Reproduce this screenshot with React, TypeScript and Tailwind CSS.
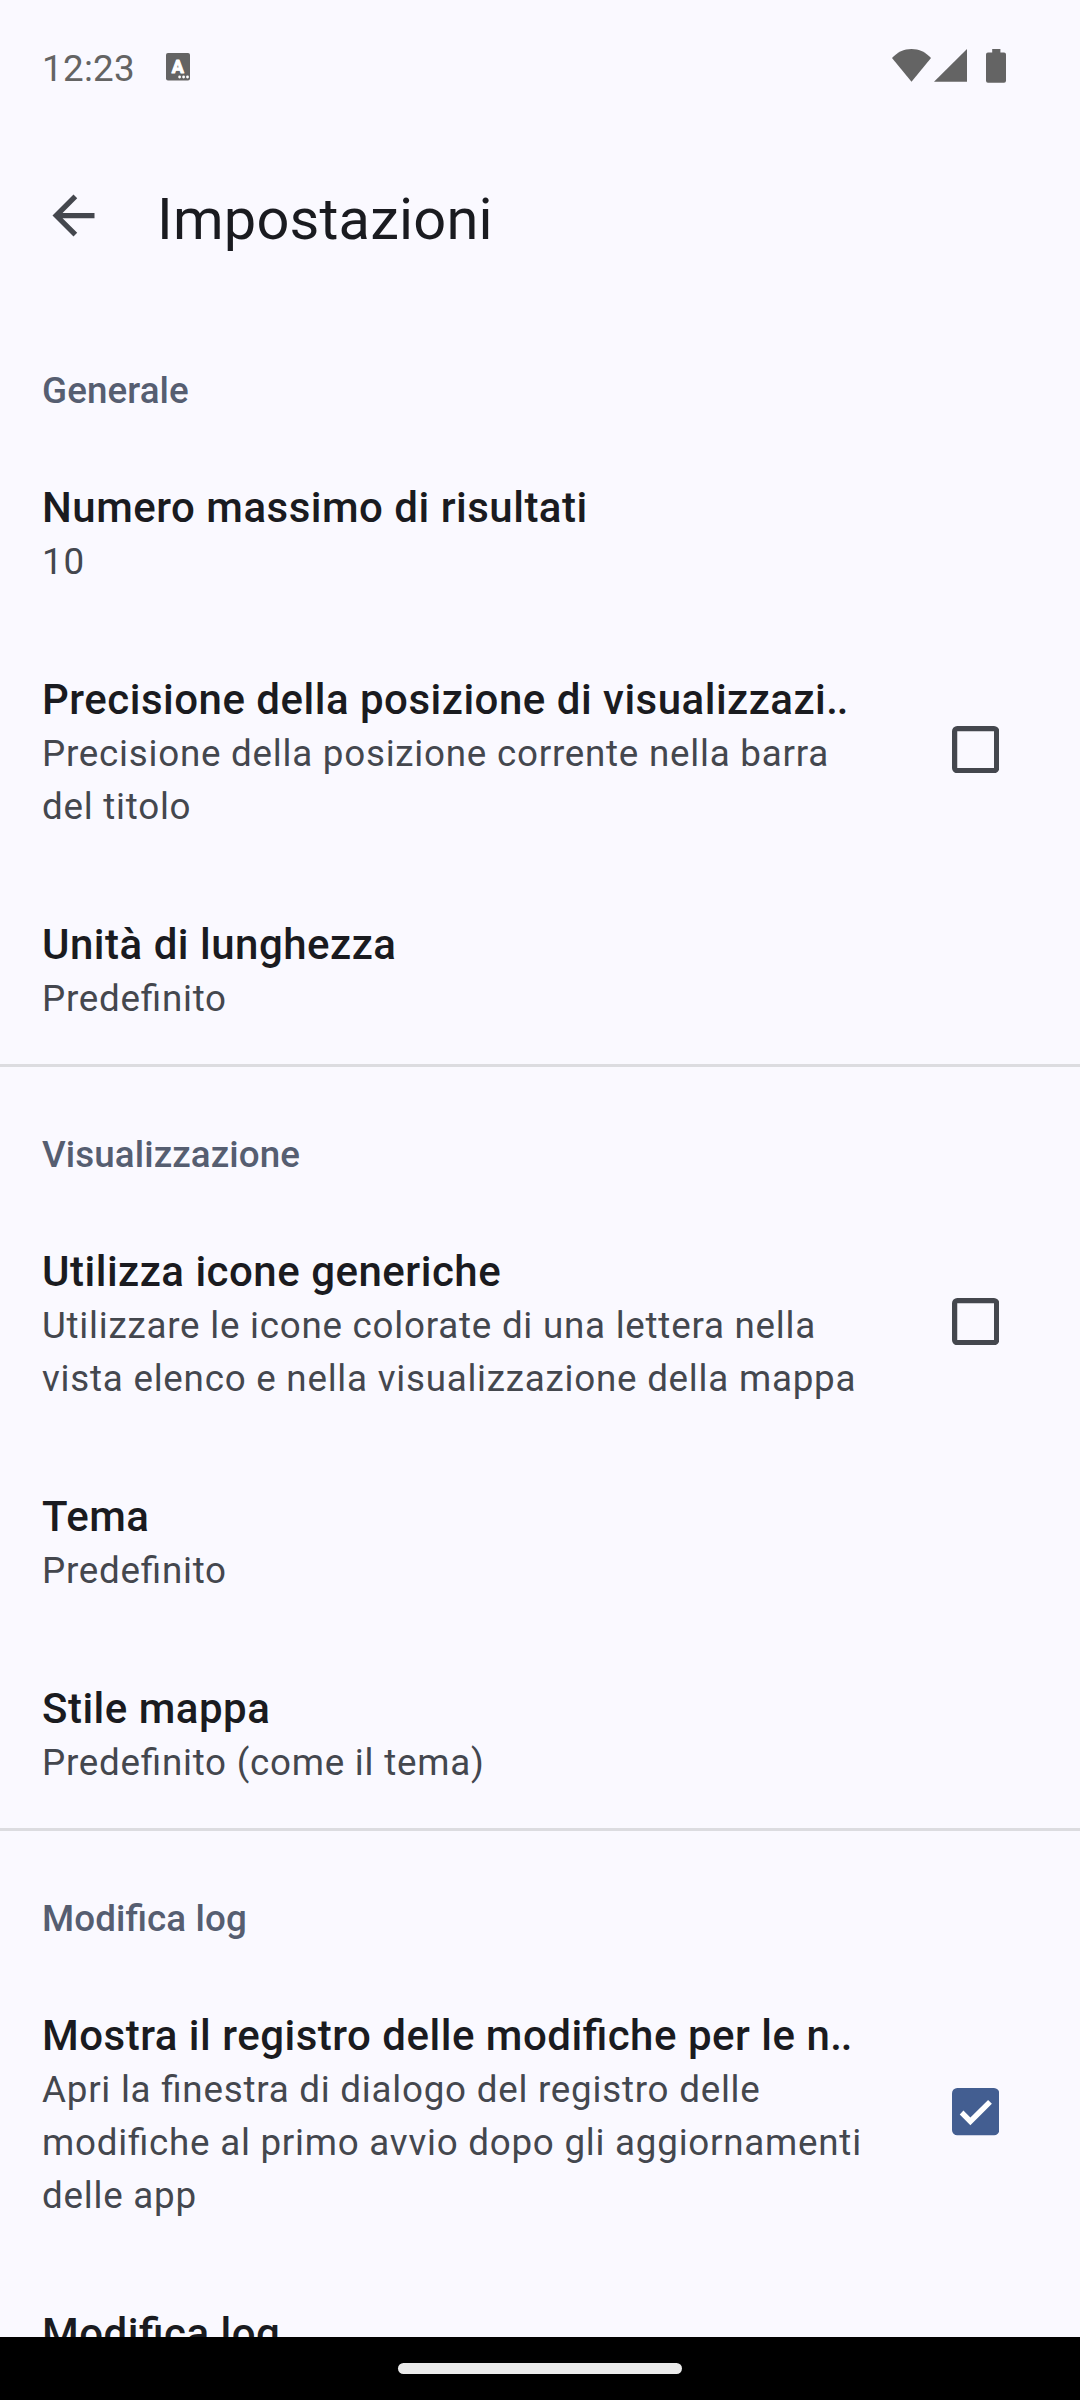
import { ReactNode } from "react"

interface RowProps {
  title: string
  truncated?: boolean
  height: string
  lines: string[]
  control?: ReactNode
}

function Checkbox({ checked = false }: { checked?: boolean }) {
  return (
    <svg className="mt-[37px] h-[47.25px] w-[47.25px] shrink-0" viewBox="0 0 18 18" fill="none">
      {checked ? (
        <>
          <rect width="18" height="18" rx="2" fill="#435e91" />
          <path d="M7 14.200L2.950 10.100L4.350 8.600L7 11.250L13.750 4.550L15.200 6Z" fill="#fff" />
        </>
      ) : (
        <rect x="1" y="1" width="16" height="16" rx="1" stroke="#44474e" strokeWidth="2" />
      )}
    </svg>
  )
}

function Row({ title, truncated, height, lines, control }: RowProps) {
  return (
    <div className={`flex shrink-0 justify-between pl-[42px] pr-[81px] ${height}`}>
      <div className="pt-[42px]">
        <div className="whitespace-nowrap text-[42px] font-medium leading-[55px] tracking-[0.5px] text-[#1a1b20]">
          {title}
          {truncated && <span className="tracking-[-1.2px]">..</span>}
        </div>
        {lines.map((line) => (
          <div key={line} className="whitespace-nowrap text-[36.75px] leading-[53px] tracking-[0.76px] text-[#44474e]">
            {line}
          </div>
        ))}
      </div>
      {control && <div className="flex items-center pb-[43px]">{control}</div>}
    </div>
  )
}

function SectionTitle({ children }: { children: ReactNode }) {
  return (
    <h2 className="flex h-[135px] shrink-0 items-center pl-[42px] pt-[40px] text-[36.75px] font-medium tracking-[0.1px] text-[#565e71]">
      {children}
    </h2>
  )
}

function Divider() {
  return <div className="h-[3px] shrink-0 bg-[#dcdce0]" />
}

function StatusBar() {
  return (
    <div className="flex h-[136px] shrink-0 items-start justify-between pl-[42px] pr-[74px]">
      <div className="flex items-start">
        <span className="w-[124px] text-[36.75px] leading-[137px] tracking-[0.3px] text-[#646464]">12:23</span>
        <svg className="mt-[53px]" width="24" height="28" viewBox="0 0 24 28">
          <rect width="24" height="27.4" rx="2" fill="#646464" />
          <text
            x="11.9"
            y="20"
            textAnchor="middle"
            fontSize="18"
            fill="#fff"
            stroke="#fff"
            strokeWidth="1"
            strokeLinejoin="round"
            className="font-['Roboto',sans-serif] font-bold"
          >
            A
          </text>
          <circle cx="13.6" cy="24" r="1.4" fill="#fff" />
          <circle cx="17.6" cy="24" r="1.4" fill="#fff" />
          <circle cx="21.500" cy="24" r="1.4" fill="#fff" />
        </svg>
      </div>
      <svg className="mt-[49px]" width="114" height="34" viewBox="0 0 114 34" fill="#646464">
        <path d="M19.500 32.700L0 8.900C5.300 3.300 12 0 19.500 0S33.700 3.300 39 8.900Z" />
        <path d="M42 32.700L75 0V32.700Z" />
        <path d="M100.200 0H108.400V3.400H112Q114 3.400 114 5.400V31.700Q114 33.700 112 33.700H96Q94 33.700 94 31.700V5.400Q94 3.400 96 3.400H100.200Z" />
      </svg>
    </div>
  )
}

export default function App() {
  return (
    <div className="flex h-[2400px] w-[1080px] flex-col overflow-hidden bg-[#faf9ff] font-['Roboto',sans-serif] [font-feature-settings:'liga'_1]">
      <StatusBar />
      <header className="flex h-[167px] shrink-0 items-center gap-[52px] pl-[42px]">
        <button type="button" aria-label="Indietro" className="pb-[8px]">
          <svg width="63" height="63" viewBox="0 0 24 24" fill="#44474e">
            <path d="M20 11H7.830l5.590-5.590L12 4l-8 8 8 8 1.410-1.410L7.830 13H20v-2z" />
          </svg>
        </button>
        <h1 className="text-[57.75px] leading-[75px] tracking-[0.2px] text-[#1a1b20]">Impostazioni</h1>
      </header>

      <main className="flex min-h-0 flex-1 flex-col overflow-hidden">
        <SectionTitle>Generale</SectionTitle>
        <Row title="Numero massimo di risultati" height="h-[192px]" lines={["10"]} />
        <Row
          title="Precisione della posizione di visualizzazi"
          truncated
          height="h-[245px]"
          lines={["Precisione della posizione corrente nella barra", "del titolo"]}
          control={<Checkbox />}
        />
        <Row title="Unità di lunghezza" height="h-[189px]" lines={["Predefinito"]} />
        <Divider />

        <SectionTitle>Visualizzazione</SectionTitle>
        <Row
          title="Utilizza icone generiche"
          height="h-[245px]"
          lines={["Utilizzare le icone colorate di una lettera nella", "vista elenco e nella visualizzazione della mappa"]}
          control={<Checkbox />}
        />
        <Row title="Tema" height="h-[192px]" lines={["Predefinito"]} />
        <Row title="Stile mappa" height="h-[189px]" lines={["Predefinito (come il tema)"]} />
        <Divider />

        <SectionTitle>Modifica log</SectionTitle>
        <Row
          title="Mostra il registro delle modifiche per le n"
          truncated
          height="h-[298px]"
          lines={[
            "Apri la finestra di dialogo del registro delle",
            "modifiche al primo avvio dopo gli aggiornamenti",
            "delle app",
          ]}
          control={<Checkbox checked />}
        />
        {/* last row scrolls under the navigation bar */}
        <Row title="Modifica log" height="h-[192px]" lines={[]} />
      </main>

      <nav className="flex h-[63px] shrink-0 items-center justify-center bg-black">
        <div className="h-[11px] w-[284px] rounded-full bg-[#ebebeb]" />
      </nav>
    </div>
  )
}
